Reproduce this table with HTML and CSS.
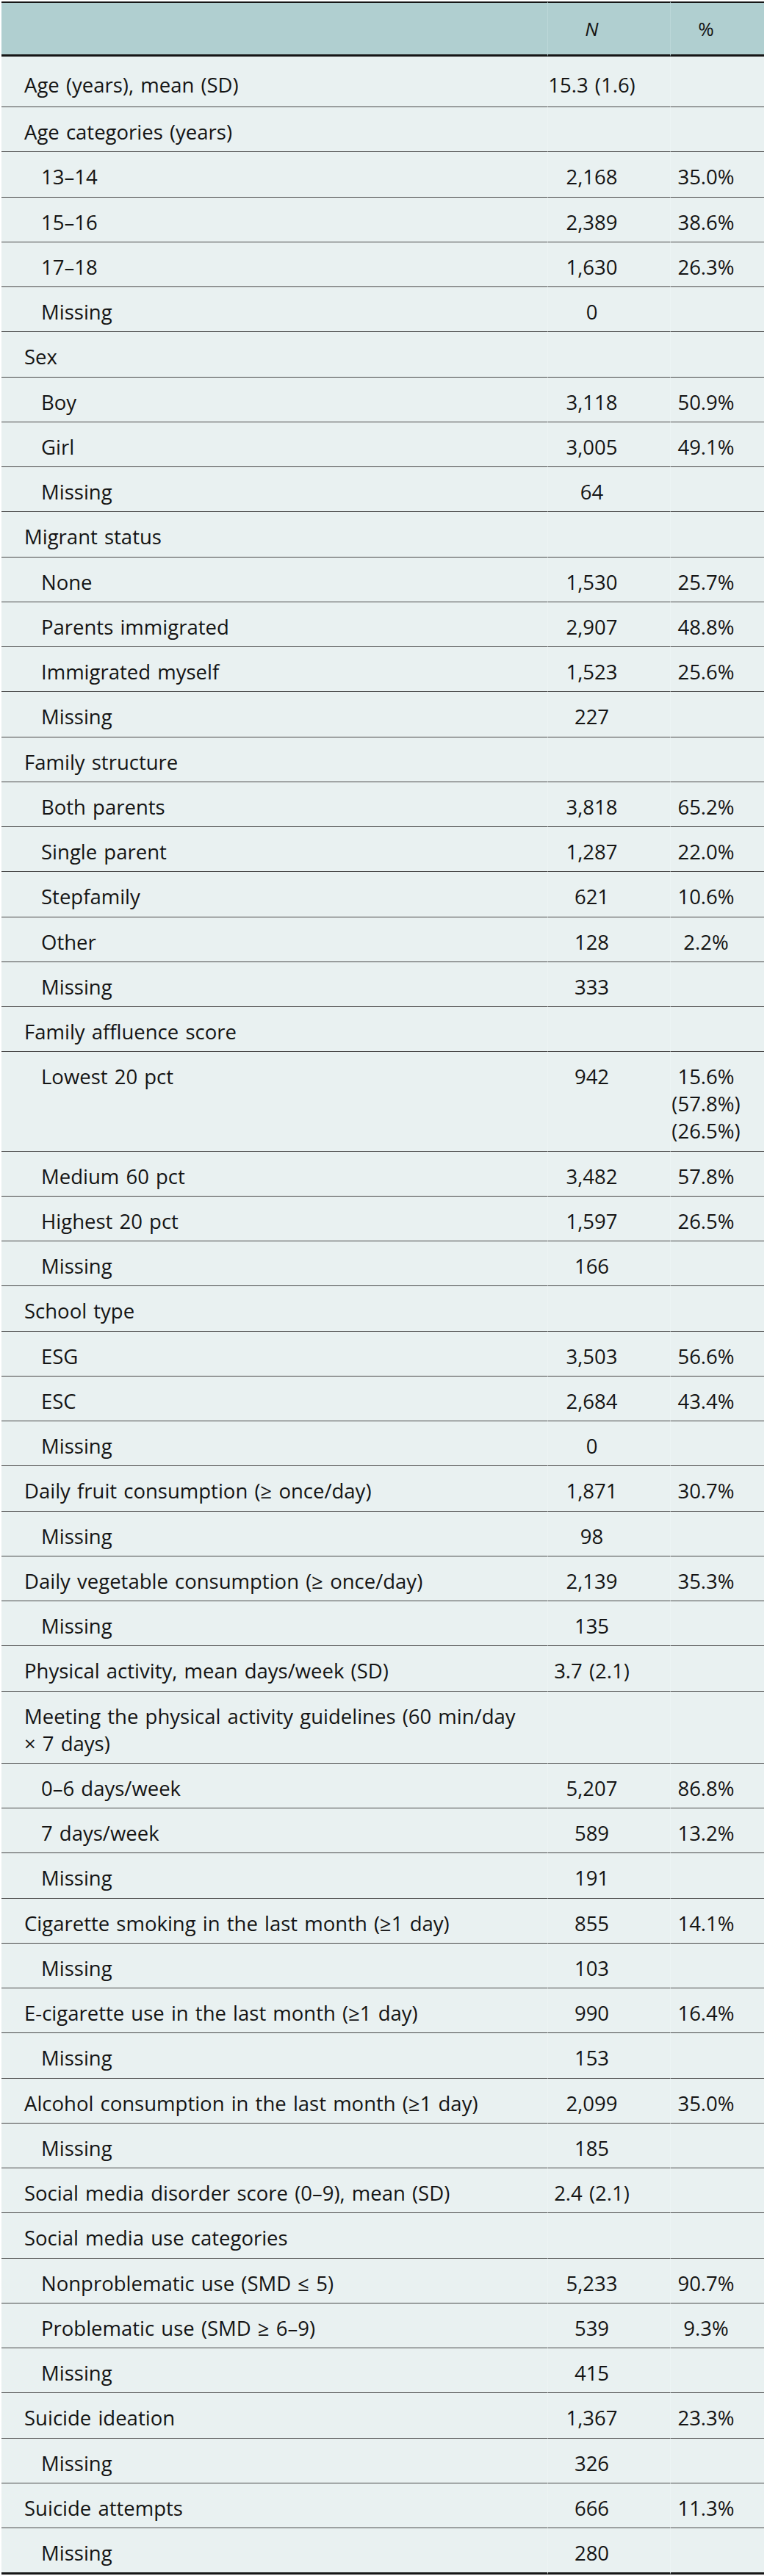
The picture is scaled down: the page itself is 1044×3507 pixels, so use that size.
FILE: index.html
```html
<!DOCTYPE html>
<html lang="en">
<head>
<meta charset="utf-8">
<title>Sample characteristics</title>
<link rel="stylesheet" href="styles.css">
</head>
<body>
<table class="tbl">
  <thead>
    <tr>
      <th class="c-label"></th>
      <th class="c-n"><i>N</i></th>
      <th class="c-pct">%</th>
    </tr>
  </thead>
  <tbody>
    <tr class="first"><td>Age (years), mean (SD)</td><td class="n">15.3 (1.6)</td><td class="p"></td></tr>
    <tr><td>Age categories (years)</td><td class="n"></td><td class="p"></td></tr>
    <tr><td class="sub">13–14</td><td class="n">2,168</td><td class="p">35.0%</td></tr>
    <tr><td class="sub">15–16</td><td class="n">2,389</td><td class="p">38.6%</td></tr>
    <tr><td class="sub">17–18</td><td class="n">1,630</td><td class="p">26.3%</td></tr>
    <tr><td class="sub">Missing</td><td class="n">0</td><td class="p"></td></tr>
    <tr><td>Sex</td><td class="n"></td><td class="p"></td></tr>
    <tr><td class="sub">Boy</td><td class="n">3,118</td><td class="p">50.9%</td></tr>
    <tr><td class="sub">Girl</td><td class="n">3,005</td><td class="p">49.1%</td></tr>
    <tr><td class="sub">Missing</td><td class="n">64</td><td class="p"></td></tr>
    <tr><td>Migrant status</td><td class="n"></td><td class="p"></td></tr>
    <tr><td class="sub">None</td><td class="n">1,530</td><td class="p">25.7%</td></tr>
    <tr><td class="sub">Parents immigrated</td><td class="n">2,907</td><td class="p">48.8%</td></tr>
    <tr><td class="sub">Immigrated myself</td><td class="n">1,523</td><td class="p">25.6%</td></tr>
    <tr><td class="sub">Missing</td><td class="n">227</td><td class="p"></td></tr>
    <tr><td>Family structure</td><td class="n"></td><td class="p"></td></tr>
    <tr><td class="sub">Both parents</td><td class="n">3,818</td><td class="p">65.2%</td></tr>
    <tr><td class="sub">Single parent</td><td class="n">1,287</td><td class="p">22.0%</td></tr>
    <tr><td class="sub">Stepfamily</td><td class="n">621</td><td class="p">10.6%</td></tr>
    <tr><td class="sub">Other</td><td class="n">128</td><td class="p">2.2%</td></tr>
    <tr><td class="sub">Missing</td><td class="n">333</td><td class="p"></td></tr>
    <tr><td>Family affluence score</td><td class="n"></td><td class="p"></td></tr>
    <tr><td class="sub">Lowest 20 pct</td><td class="n">942</td><td class="p">15.6% (57.8%) (26.5%)</td></tr>
    <tr><td class="sub">Medium 60 pct</td><td class="n">3,482</td><td class="p">57.8%</td></tr>
    <tr><td class="sub">Highest 20 pct</td><td class="n">1,597</td><td class="p">26.5%</td></tr>
    <tr><td class="sub">Missing</td><td class="n">166</td><td class="p"></td></tr>
    <tr><td>School type</td><td class="n"></td><td class="p"></td></tr>
    <tr><td class="sub">ESG</td><td class="n">3,503</td><td class="p">56.6%</td></tr>
    <tr><td class="sub">ESC</td><td class="n">2,684</td><td class="p">43.4%</td></tr>
    <tr><td class="sub">Missing</td><td class="n">0</td><td class="p"></td></tr>
    <tr><td>Daily fruit consumption (≥ once/day)</td><td class="n">1,871</td><td class="p">30.7%</td></tr>
    <tr><td class="sub">Missing</td><td class="n">98</td><td class="p"></td></tr>
    <tr><td>Daily vegetable consumption (≥ once/day)</td><td class="n">2,139</td><td class="p">35.3%</td></tr>
    <tr><td class="sub">Missing</td><td class="n">135</td><td class="p"></td></tr>
    <tr><td>Physical activity, mean days/week (SD)</td><td class="n">3.7 (2.1)</td><td class="p"></td></tr>
    <tr><td>Meeting the physical activity guidelines (60 min/day<br>× 7 days)</td><td class="n"></td><td class="p"></td></tr>
    <tr><td class="sub">0–6 days/week</td><td class="n">5,207</td><td class="p">86.8%</td></tr>
    <tr><td class="sub">7 days/week</td><td class="n">589</td><td class="p">13.2%</td></tr>
    <tr><td class="sub">Missing</td><td class="n">191</td><td class="p"></td></tr>
    <tr><td>Cigarette smoking in the last month (≥1 day)</td><td class="n">855</td><td class="p">14.1%</td></tr>
    <tr><td class="sub">Missing</td><td class="n">103</td><td class="p"></td></tr>
    <tr><td>E-cigarette use in the last month (≥1 day)</td><td class="n">990</td><td class="p">16.4%</td></tr>
    <tr><td class="sub">Missing</td><td class="n">153</td><td class="p"></td></tr>
    <tr><td>Alcohol consumption in the last month (≥1 day)</td><td class="n">2,099</td><td class="p">35.0%</td></tr>
    <tr><td class="sub">Missing</td><td class="n">185</td><td class="p"></td></tr>
    <tr><td>Social media disorder score (0–9), mean (SD)</td><td class="n">2.4 (2.1)</td><td class="p"></td></tr>
    <tr><td>Social media use categories</td><td class="n"></td><td class="p"></td></tr>
    <tr><td class="sub">Nonproblematic use (SMD ≤ 5)</td><td class="n">5,233</td><td class="p">90.7%</td></tr>
    <tr><td class="sub">Problematic use (SMD ≥ 6–9)</td><td class="n">539</td><td class="p">9.3%</td></tr>
    <tr><td class="sub">Missing</td><td class="n">415</td><td class="p"></td></tr>
    <tr><td>Suicide ideation</td><td class="n">1,367</td><td class="p">23.3%</td></tr>
    <tr><td class="sub">Missing</td><td class="n">326</td><td class="p"></td></tr>
    <tr><td>Suicide attempts</td><td class="n">666</td><td class="p">11.3%</td></tr>
    <tr class="last"><td class="sub">Missing</td><td class="n">280</td><td class="p"></td></tr>
  </tbody>
</table>
</body>
</html>
```

FILE: styles.css
```css
html, body {
  background: #ffffff;
}
body {
  margin: 2px;
  font-family: "Open Sans", "Noto Sans", "DejaVu Sans", sans-serif;
  color: #141414;
}
.tbl {
  width: 1038px;
  table-layout: fixed;
  border-collapse: separate;
  border-spacing: 0;
  font-size: 27.5px;
  line-height: 37px;
  word-spacing: 2px;
}
.tbl th,
.tbl td {
  box-sizing: border-box;
  padding: 15px 0 8.25px 31px;
  text-align: left;
  vertical-align: top;
  font-weight: normal;
  white-space: normal;
}
.tbl thead th {
  background: #b0cfd0;
  height: 75px;
  padding-top: 0;
  padding-bottom: 0;
  vertical-align: middle;
  border-top: 2px solid #161616;
  border-bottom: 3px solid #161616;
  font-size: 26px;
}
.tbl thead th i {
  font-style: italic;
}
.c-label { width: 743px; }
.c-n { width: 167px; }
.c-pct { width: 128px; }
.tbl thead th.c-n,
.tbl thead th.c-pct {
  border-left: 1px solid #bcd7d8;
}
.tbl tbody td {
  background: #e9f1f1;
  border-bottom: 1px solid #474747;
}
.tbl tbody td.n,
.tbl tbody td.p {
  border-left: 1px solid #edf4f4;
}
.tbl td.sub {
  padding-left: 54px;
}
.tbl th.c-n,
.tbl td.n {
  text-align: center;
  padding-left: 0;
  padding-right: 47px;
}
.tbl th.c-pct,
.tbl td.p {
  text-align: center;
  padding-left: 0;
  padding-right: 31px;
}
.tbl tr.first td {
  padding-top: 20px;
  padding-bottom: 11px;
}
.tbl tr.last td {
  border-bottom: 3px solid #161616;
}
```
